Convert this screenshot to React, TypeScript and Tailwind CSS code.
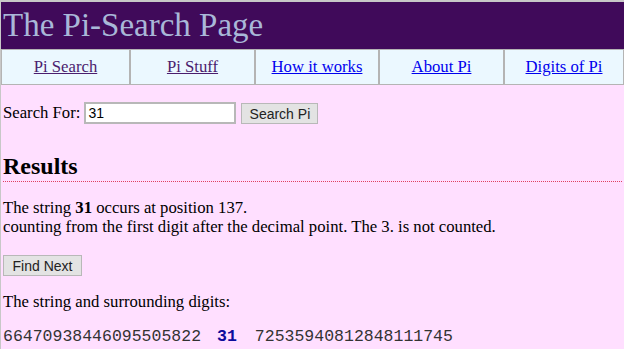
export default function App() {
  const links = [
    { label: 'Pi Search', visited: true },
    { label: 'Pi Stuff', visited: true },
    { label: 'How it works', visited: false },
    { label: 'About Pi', visited: false },
    { label: 'Digits of Pi', visited: false },
  ];

  return (
    <div className="min-h-[349px] bg-[#ffdfff] font-['Liberation_Serif',serif] text-[16.7px] text-black border-t-2 border-l border-[#c8c8c8]">
      <div className="bg-[#400a5a] h-[47px] px-[2px] flex items-center">
        <h1 className="text-[33px] leading-none text-[#a9b8d8] font-normal">The Pi-Search Page</h1>
      </div>

      <div className="grid grid-cols-[127px_125px_124px_125px_1fr] bg-[#ebf8ff] h-[36px] border border-[#b4b4b4]">
        {links.map((l, i) => (
          <div
            key={l.label}
            className={`flex items-center justify-center ${i > 0 ? 'border-l-2 border-[#b4b4b4]' : ''}`}
          >
            <a
              href="#"
              className={`underline ${l.visited ? 'text-[#4b1d6e]' : 'text-[#0000ee]'}`}
            >
              {l.label}
            </a>
          </div>
        ))}
      </div>

      <div className="px-[2px]">
        <form className="flex items-center mt-[17px] h-[22px]">
          <span>Search For:</span>
          <input
            defaultValue="31"
            className="ml-[4px] w-[152px] h-[22px] bg-white border-2 border-[#b8b8b8] px-[2px] text-[14px] font-['Liberation_Sans',sans-serif] outline-none"
          />
          <button
            type="button"
            className="ml-[5px] w-[77px] h-[21px] bg-[#e3e3e3] border border-[#b8b8b8] text-[14px] font-['Liberation_Sans',sans-serif] text-[#222]"
          >
            Search Pi
          </button>
        </form>

        <h2 className="mt-[30px] text-[24px] font-bold leading-none">Results</h2>
        <div className="mt-[3px] border-b border-dotted border-[#e04060]" />

        <p className="mt-[16px] leading-[19px]">
          The string <b>31</b> occurs at position 137.
          <br />
          counting from the first digit after the decimal point. The 3. is not counted.
        </p>

        <button
          type="button"
          className="mt-[19px] block w-[79px] h-[21px] bg-[#e3e3e3] border border-[#b8b8b8] text-[14px] font-['Liberation_Sans',sans-serif] text-[#222]"
        >
          Find Next
        </button>

        <p className="mt-[16px] leading-[19px]">The string and surrounding digits:</p>

        <p className="mt-[16px] font-['Liberation_Mono',monospace] text-[16.5px] text-[#333] leading-[19px] whitespace-pre">
          66470938446095505822<b className="text-[#0c0c9c] ml-[16px] mr-[18px]">31</b>72535940812848111745
        </p>
      </div>
    </div>
  );
}
